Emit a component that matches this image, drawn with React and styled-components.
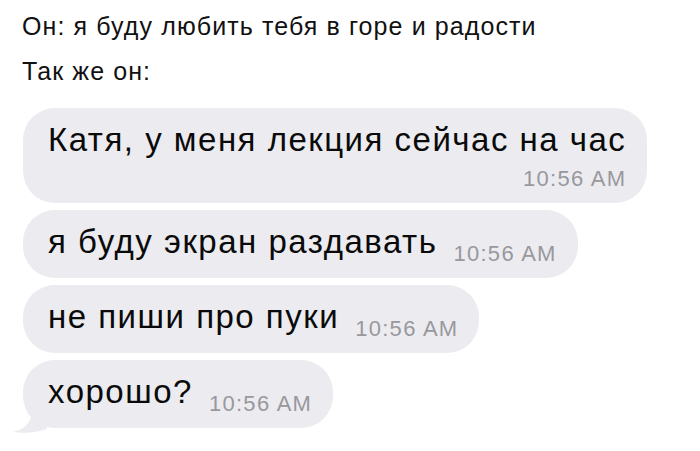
import React from 'react';
import styled, {createGlobalStyle} from 'styled-components';

const Global = createGlobalStyle`
  html, body {
    margin: 0;
    background: #fff;
  }
  body {
    font-family: "Liberation Sans", Arial, sans-serif;
    color: #000;
  }
`;

const Page = styled.div`
  width: 700px;
  height: 451px;
  padding: 11px 0 0 23px;
  box-sizing: border-box;
  overflow: hidden;
`;

const Caption = styled.div`
  font-size: 25px;
  line-height: 30px;
  letter-spacing: 1.1px;
  color: #111;
  margin-left: -1px;
  margin-bottom: ${p => p.$gap}px;
`;

const Thread = styled.div`
  display: flex;
  flex-direction: column;
  align-items: flex-start;
  gap: 7px;
`;

const Bubble = styled.div`
  position: relative;
  display: flex;
  flex-direction: ${p => (p.$stacked ? 'column' : 'row')};
  align-items: flex-end;
  background: #ebebf0;
  border-radius: 32px;
  padding: 12px 21px 12px 25px;

  ${p => p.$tail && `
    &::before {
      content: '';
      position: absolute;
      left: -10px;
      bottom: -5px;
      width: 34px;
      height: 28px;
      background: #ebebf0;
      clip-path: path('M0 27 C10 25 17 19 19 9 L34 0 L34 24 C25 27 12 29 0 27 Z');
    }
  `}
`;

const Text = styled.span`
  font-size: 33px;
  line-height: 40px;
  letter-spacing: 1.5px;
  color: #0a0a0a;
  white-space: nowrap;
  align-self: ${p => (p.$stacked ? 'flex-start' : 'auto')};
  margin-bottom: ${p => (p.$stacked ? 0 : 4)}px;
`;

const Time = styled.span`
  font-size: 22px;
  line-height: 24px;
  letter-spacing: 1.3px;
  color: #98989d;
  white-space: nowrap;
  margin-left: ${p => (p.$stacked ? 0 : 16)}px;
  margin-top: ${p => (p.$stacked ? 7 : 0)}px;
`;

const messages = [
  {text: 'Катя, у меня лекция сейчас на час', time: '10:56 AM', stacked: true},
  {text: 'я буду экран раздавать', time: '10:56 AM'},
  {text: 'не пиши про пуки', time: '10:56 AM'},
  {text: 'хорошо?', time: '10:56 AM', tail: true},
];

export default function App() {
  return (
    <Page>
      <Global />
      <Caption $gap={15}>Он: я буду любить тебя в горе и радости</Caption>
      <Caption $gap={22}>Так же он:</Caption>
      <Thread>
        {messages.map((m, i) => (
          <Bubble key={i} $stacked={m.stacked} $tail={m.tail}>
            <Text $stacked={m.stacked}>{m.text}</Text>
            <Time $stacked={m.stacked}>{m.time}</Time>
          </Bubble>
        ))}
      </Thread>
    </Page>
  );
}
